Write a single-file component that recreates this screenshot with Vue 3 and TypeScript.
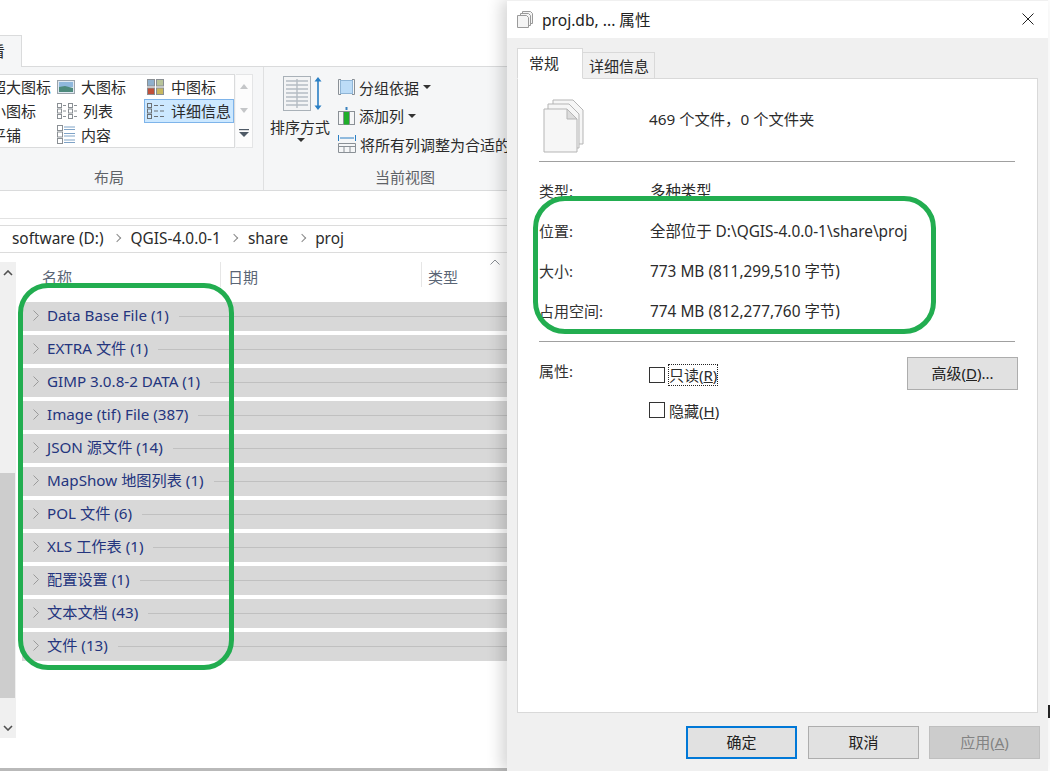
<script setup lang="ts">
const groups: string[] = [
  'Data Base File (1)', 'EXTRA 文件 (1)', 'GIMP 3.0.8-2 DATA (1)', 'Image (tif) File (387)',
  'JSON 源文件 (14)', 'MapShow 地图列表 (1)', 'POL 文件 (6)', 'XLS 工作表 (1)',
  '配置设置 (1)', '文本文档 (43)', '文件 (13)'
]
const info = [
  ['类型:', '多种类型'],
  ['位置:', '全部位于 D:\\QGIS-4.0.0-1\\share\\proj'],
  ['大小:', '773 MB (811,299,510 字节)'],
  ['占用空间:', '774 MB (812,277,760 字节)']
]
</script>

<template>
  <div class="screen">
    <div class="explorer">
      <div class="tabrow"><div class="viewtab"><span>看</span></div></div>
      <div class="ribbon">
        <div class="rgroup layout">
          <div class="galwrap">
            <div class="gallery">
              <div class="gi c1">超大图标</div>
              <div class="gi">
                <svg width="18" height="14" viewBox="0 0 18 14"><rect x=".5" y=".5" width="17" height="13" fill="#dfe9f2" stroke="#9aa3ab"/><rect x="2" y="2" width="14" height="5" fill="#8fb8dc"/><path d="M2 7l6-1 8 2v4H2z" fill="#4d8a7c"/></svg>
                <span>大图标</span>
              </div>
              <div class="gi c3">
                <svg width="17" height="16" viewBox="0 0 17 16"><rect x=".5" y=".5" width="7" height="6.5" fill="#8fb0cc" stroke="#8a8f94"/><rect x="9.5" y=".5" width="7" height="6.5" fill="#b8c49a" stroke="#8a8f94"/><rect x=".5" y="9" width="7" height="6.5" fill="#c0503a" stroke="#8a8f94"/><rect x="9.5" y="9" width="7" height="6.5" fill="#c8b860" stroke="#8a8f94"/></svg>
                <span>中图标</span>
              </div>
              <div class="gi c1">小图标</div>
              <div class="gi">
                <svg width="20" height="16" viewBox="0 0 20 16" fill="none" stroke="#8a8f94"><rect x=".5" y=".5" width="4" height="4"/><rect x=".5" y="6" width="4" height="4"/><rect x=".5" y="11.5" width="4" height="4"/><rect x="11.5" y=".5" width="4" height="4"/><rect x="11.5" y="6" width="4" height="4"/><rect x="11.5" y="11.5" width="4" height="4"/><path d="M6 2.5h3M6 8h3M6 13.5h3M17 2.5h3M17 8h3M17 13.5h3"/></svg>
                <span>列表</span>
              </div>
              <div class="gi c3 sel">
                <svg width="17" height="16" viewBox="0 0 17 16" fill="none" stroke="#6b7075"><rect x=".5" y=".5" width="4" height="4"/><rect x=".5" y="6" width="4" height="4"/><rect x=".5" y="11.5" width="4" height="4"/><path d="M7 2.5h4M13 2.5h4M7 8h4M13 8h4M7 13.5h4M13 13.5h4"/></svg>
                <span>详细信息</span>
              </div>
              <div class="gi c1">平铺</div>
              <div class="gi">
                <svg width="18" height="19" viewBox="0 0 18 19" fill="none"><g stroke="#8a8f94"><rect x=".5" y=".5" width="5" height="5"/><rect x=".5" y="7" width="5" height="5"/><rect x=".5" y="13.5" width="5" height="5"/></g><path d="M7 2h11M7 4.5h11M7 8.5h11M7 11h11M7 15h11M7 17.5h11" stroke="#7fa3c7"/></svg>
                <span>内容</span>
              </div>
              <div class="gi"></div>
            </div>
            <div class="spin">
              <i class="tri up"></i>
              <i class="tri dn"></i>
              <svg class="more" width="10" height="8" viewBox="0 0 10 8"><path d="M0 .5h10" stroke="#4f5a66" stroke-width="1.4"/><path d="M0 3h10L5 8z" fill="#4f5a66"/></svg>
            </div>
          </div>
          <div class="glabel">布局</div>
        </div>
        <div class="rgroup view">
          <div class="viewbody">
            <div class="sortbtn">
              <div class="sorticon">
                <svg width="28" height="35" viewBox="0 0 28 35"><rect x=".5" y=".5" width="27" height="34" fill="#f3f4f5" stroke="#a9b1b8"/><path d="M3 5h22M3 9h22M3 13h22M3 17h22M3 21h22M3 25h22M3 29h22M14 3v29" stroke="#b5bcc3" stroke-width="1.4"/></svg>
                <svg width="8" height="35" viewBox="0 0 8 35"><path d="M4 1l3.5 4.5h-7zM4 34l3.5-4.5h-7z" fill="#2a7fc4"/><path d="M4 4v27" stroke="#2a7fc4" stroke-width="1.6"/></svg>
              </div>
              <span class="sortlabel">排序方式</span>
              <i class="caret"></i>
            </div>
            <div class="viewlist">
              <div class="vi">
                <svg width="17" height="16" viewBox="0 0 17 16"><path d="M3 .5H.5v15H3M14 .5h2.5v15H14" fill="none" stroke="#8a9096"/><rect x="2.5" y="1.5" width="12" height="13" fill="#bcdcf7" stroke="#8fb5d6"/></svg>
                <span>分组依据</span><i class="caret"></i>
              </div>
              <div class="vi">
                <svg width="17" height="18" viewBox="0 0 17 18" fill="none"><rect x=".5" y="4.5" width="16" height="13" stroke="#8a9096"/><path d="M5.5 4.5v13M11.5 4.5v13" stroke="#8a9096"/><rect x="6" y="5" width="5" height="12.5" fill="#1fae2a"/><path d="M8.5 0v3" stroke="#3a82bd" stroke-width="2"/></svg>
                <span>添加列</span><i class="caret"></i>
              </div>
              <div class="vi">
                <svg width="18" height="18" viewBox="0 0 18 18" fill="none"><path d="M.5 0v6M17.5 0v6M2 3h14" stroke="#2a7fc4"/><path d="M.5 8.500h17v9H.5zM.5 11.500h17M6 11.500v6M12 11.500v6" stroke="#8a9096"/></svg>
                <span>将所有列调整为合适的</span>
              </div>
            </div>
          </div>
          <div class="glabel">当前视图</div>
        </div>
      </div>
      <div class="gapstrip"></div>
      <div class="address">
        <span class="crumb">software (D:)</span><span class="chev"></span>
        <span class="crumb">QGIS-4.0.0-1</span><span class="chev"></span>
        <span class="crumb">share</span><span class="chev"></span>
        <span class="crumb">proj</span>
      </div>
      <div class="content">
        <div class="scrollbar">
          <svg class="sa" width="10" height="6" viewBox="0 0 10 6"><path d="M1 5l4-4 4 4" fill="none" stroke="#505050" stroke-width="1.6"/></svg>
          <div class="track"><div class="thumb"></div></div>
          <svg class="sa" width="10" height="6" viewBox="0 0 10 6"><path d="M1 1l4 4 4-4" fill="none" stroke="#505050" stroke-width="1.6"/></svg>
        </div>
        <div class="filelist">
          <div class="cols">
            <div class="col name">名称</div>
            <div class="col date">日期</div>
            <div class="col type">类型
              <svg class="sorta" width="10" height="6" viewBox="0 0 10 6"><path d="M.5 5.500L5 1l4.500 4.500" fill="none" stroke="#8a8f94"/></svg>
            </div>
          </div>
          <div class="groups">
            <div v-for="g in groups" :key="g" class="grp">
              <svg class="gchev" width="6" height="11" viewBox="0 0 6 11"><path d="M.5.500l5 5-5 5" fill="none" stroke="#9a9a9a"/></svg>
              <span class="gname">{{ g }}</span>
              <span class="gline"></span>
            </div>
          </div>
        </div>
      </div>
    </div>

    <div class="dialog">
      <div class="titlebar">
        <svg width="16" height="17" viewBox="0 0 16 17" fill="#f4f4f4" stroke="#9a9a9a"><path d="M5.500.5h8l2 2v10h-10z"/><path d="M3.500 2.500h8l2 2v10h-10z"/><path d="M.5 4.500h9l2 2v10H.5z"/></svg>
        <span class="ttext">proj.db, ... 属性</span>
        <svg class="close" width="12" height="12" viewBox="0 0 12 12"><path d="M.5.500l11 11M11.500.500l-11 11" stroke="#222" stroke-width="1"/></svg>
      </div>
      <div class="dbody">
        <div class="dtabs">
          <div class="dtab active">常规</div>
          <div class="dtab">详细信息</div>
        </div>
        <div class="panel">
          <div class="head">
            <svg width="42" height="54" viewBox="0 0 42 54">
              <g fill="#f6f6f6" stroke="#b5b5b5">
                <path d="M10 1h20l10 10v34H10z"/>
                <path d="M5 5h21l10 10v34H5z"/>
                <path d="M1 10h23l10 10v33H1z"/>
                <path d="M24 10v10h10z" fill="#dcdcdc"/>
              </g>
            </svg>
            <span>469 个文件，0 个文件夹</span>
          </div>
          <div class="hr"></div>
          <div class="rows">
            <div v-for="r in info" :key="r[0]" class="row">
              <span class="lb">{{ r[0] }}</span><span>{{ r[1] }}</span>
            </div>
          </div>
          <div class="hr second"></div>
          <div class="attrs">
            <span class="lb attrlb">属性:</span>
            <div class="checks">
              <label class="chk"><i class="box"></i><span class="focus">只读(<u>R</u>)</span></label>
              <label class="chk"><i class="box"></i><span>隐藏(<u>H</u>)</span></label>
            </div>
            <div class="btn adv">高级(<u>D</u>)...</div>
          </div>
        </div>
        <div class="footer">
          <div class="btn primary">确定</div>
          <div class="btn">取消</div>
          <div class="btn disabled">应用(<u>A</u>)</div>
        </div>
      </div>
    </div>

    <div class="ring ring-left"></div>
    <div class="ring ring-right"></div>
    <i class="edge-mark"></i>
  </div>
</template>

<style scoped>
.screen {
  position: relative;
  width: 1050px;
  height: 771px;
  overflow: hidden;
  background: #fff;
  font-family: "Noto Sans", "Noto Sans CJK SC", sans-serif;
  font-size: 15px;
  color: #2b2b2b;
}
.explorer {
  width: 520px;
  height: 768px;
  border-bottom: 3px solid #b9b9b9;
  display: flex;
  flex-direction: column;
}
.tabrow {
  height: 67px;
  box-sizing: border-box;
  padding-top: 35px;
  border-bottom: 1px solid #dadbdc;
  flex: none;
}
.viewtab {
  width: 22px;
  height: 32px;
  box-sizing: border-box;
  background: #f5f6f7;
  border: 1px solid #dadbdc;
  border-left: 0;
  border-bottom: 0;
  overflow: hidden;
  position: relative;
  line-height: 30px;
  direction: rtl;
  padding-right: 16px;
  white-space: nowrap;
}
.ribbon {
  height: 124px;
  flex: none;
  box-sizing: border-box;
  background: #f5f6f7;
  border-bottom: 1px solid #dadbdc;
  display: flex;
}
.rgroup {
  display: flex;
  flex-direction: column;
  height: 123px;
}
.layout {
  width: 264px;
  flex: none;
  border-right: 1px solid #dfe0e1;
  box-sizing: border-box;
  padding-top: 7px;
}
.galwrap {
  display: flex;
  height: 74px;
}
.gallery {
  width: 235px;
  height: 74px;
  box-sizing: border-box;
  background: #fff;
  border: 1px solid #dadbdc;
  border-left: 0;
  display: grid;
  grid-template-columns: 55px 89px 90px;
  grid-auto-rows: 24px;
  overflow: hidden;
}
.gi {
  display: flex;
  align-items: center;
  gap: 6px;
  padding-left: 2px;
  padding-bottom: 1px;
  white-space: nowrap;
  box-sizing: border-box;
}
.c3 { padding-left: 3px; gap: 7px; }
.c1 { padding-left: 0; justify-content: flex-end; }
.gallery .c1:nth-child(1) { padding-right: 4px; }
.gallery .c1:nth-child(4) { padding-right: 19px; }
.gallery .c1:nth-child(7) { padding-right: 34px; }
.sel {
  background: #cce8ff;
  border: 1px solid #7eb4ea;
  padding-left: 2px;
}
.spin {
  width: 17px;
  height: 74px;
  box-sizing: border-box;
  margin-left: 1px;
  background: #fcfcfc;
  border: 1px solid #e4e5e6;
  border-left: 0;
  display: flex;
  flex-direction: column;
  align-items: center;
  padding-top: 9px;
}
.tri { width: 0; height: 0; border: 4px solid transparent; }
.tri.up { border-top: 0; border-bottom: 5px solid #c4c6c8; }
.tri.dn { border-bottom: 0; border-top: 5px solid #c4c6c8; margin-top: 19px; }
.more { margin-top: 16px; display: block; }
.glabel {
  text-align: center;
  color: #5f6368;
  line-height: 20px;
  margin-top: 19px;
}
.layout .glabel { width: 218px; }
.view {
  flex: 1;
  padding-top: 9px;
  position: relative;
}
.viewbody { display: flex; height: 72px; }
.sortbtn {
  width: 74px;
  display: flex;
  flex-direction: column;
  align-items: center;
  position: relative;
}
.sorticon { display: flex; gap: 3px; margin-left: 2px; }
.sortlabel {
  margin-top: 6px;
  line-height: 20px;
  white-space: nowrap;
  margin-left: -2px;
}
.sortbtn .caret { margin: 1px 0 0; }
.caret {
  display: inline-block;
  width: 0;
  height: 0;
  margin-left: 0;
  border: 4px solid transparent;
  border-bottom: 0;
  border-top: 4px solid #333;
}
.viewlist {
  display: flex;
  flex-direction: column;
  gap: 10.500px;
  margin-top: 2px;
}
.vi {
  display: flex;
  align-items: center;
  gap: 4px;
  height: 18px;
  white-space: nowrap;
}
.view .glabel { margin-top: 19px; text-align: left; padding-left: 111px; }
.gapstrip {
  height: 27px;
  flex: none;
  border-bottom: 1px solid #e2e2e2;
  box-sizing: content-box;
}
.address {
  height: 26px;
  flex: none;
  margin-top: 6px;
  border-top: 1px solid #dcdcdc;
  border-bottom: 1px solid #dcdcdc;
  display: flex;
  align-items: center;
  padding: 0 0 2px 12px;
  box-sizing: content-box;
  height: 24px;
  gap: 10.500px;
  font-size: 15.400px;
  color: #2a2a2a;
  white-space: nowrap;
}
.chev {
  width: 5px;
  height: 5px;
  border-top: 1.500px solid #8a8a8a;
  border-right: 1.500px solid #8a8a8a;
  transform: rotate(45deg);
  flex: none;
}
.content {
  display: flex;
  flex: 1;
  margin-top: 9px;
  min-height: 0;
}
.scrollbar {
  width: 16px;
  height: 476px;
  flex: none;
  background: #f0f0f0;
  display: flex;
  flex-direction: column;
  align-items: center;
  justify-content: space-between;
  padding: 8px 0 7px;
  box-sizing: border-box;
}
.track {
  flex: 1;
  width: 16px;
  padding-top: 197px;
  box-sizing: border-box;
}
.thumb { width: 15px; height: 225px; background: #cdcdcd; }
.filelist {
  flex: 1;
  padding-left: 6px;
  min-width: 0;
}
.cols {
  height: 40px;
  display: flex;
  color: #5a6575;
}
.col {
  height: 25px;
  box-sizing: border-box;
  line-height: 31px;
  position: relative;
}
.name { width: 199px; padding-left: 20px; border-right: 1px solid #e6e6e6; }
.date { width: 201px; padding-left: 7px; border-right: 1px solid #e6e6e6; }
.type { width: 86px; padding-left: 6px; }
.sorta { position: absolute; left: 68px; top: -3px; }
.groups {
  display: flex;
  flex-direction: column;
  gap: 4px;
}
.grp {
  height: 29px;
  background: #d8d8d8;
  display: flex;
  align-items: center;
  padding-left: 11px;
  width: 486px;
  box-sizing: border-box;
  gap: 8px;
  color: #24357e;
  font-size: 15.200px;
  white-space: nowrap;
}
.gchev { margin-top: -3px; }
.gname { padding-bottom: 3px; line-height: 20px; }
.gline { flex: 1; height: 1px; background: #c0c0c0; margin-left: 2px; }
.dialog {
  position: absolute;
  left: 507px;
  top: 0;
  width: 541px;
  height: 771px;
  background: #f0f0f0;
  box-shadow: -6px 0 14px rgba(0, 0, 0, .16);
  display: flex;
  flex-direction: column;
}
.titlebar {
  height: 38px;
  flex: none;
  box-sizing: border-box;
  background: #fff;
  border-top: 1px solid #f0f0f0;
  display: flex;
  align-items: center;
  padding-left: 10px;
  gap: 9px;
  position: relative;
  font-size: 15.600px;
  color: #222;
}
.close { position: absolute; left: 515px; top: 12px; }
.dbody {
  flex: 1;
  display: flex;
  flex-direction: column;
  padding: 11px 0 0 10px;
  min-height: 0;
}
.dtabs {
  display: flex;
  height: 30px;
  flex: none;
  align-items: flex-end;
  position: relative;
  z-index: 1;
  margin-bottom: -1px;
}
.dtab {
  height: 27px;
  line-height: 26px;
  padding: 0 6px;
  width: 72px;
  box-sizing: border-box;
  text-align: center;
  background: #f0f0f0;
  border: 1px solid #d9d9d9;
  border-left: 0;
  border-bottom: 1px solid #d9d9d9;
  white-space: nowrap;
}
.dtab.active {
  width: 66px;
  height: 31px;
  line-height: 28px;
  background: #fff;
  border: 1px solid #d9d9d9;
  border-bottom: 1px solid #fff;
  text-align: left;
  padding-left: 11px;
}
.panel {
  width: 521px;
  height: 635px;
  flex: none;
  box-sizing: border-box;
  background: #fff;
  border: 1px solid #d9d9d9;
  padding: 0 22px 0 21px;
}
.head {
  height: 82px;
  display: flex;
  align-items: center;
  gap: 64px;
  padding: 0 0 0 4px;
  font-size: 15.300px;
}
.head svg { margin-top: 12px; }
.head span { margin-top: -4px; }
.hr { height: 1px; background: #a0a0a0; }
.rows {
  padding-top: 8px;
  height: 179px;
  box-sizing: border-box;
}
.row {
  height: 40px;
  display: flex;
  align-items: center;
  font-size: 15.400px;
}
.lb { width: 111px; flex: none; color: #333; font-size: 15px; }
.attrs {
  display: flex;
  padding-top: 15px;
  position: relative;
}
.attrlb { line-height: 28px; width: 110px; }
.checks { display: flex; flex-direction: column; gap: 11px; padding-top: 6px; }
.chk {
  display: flex;
  align-items: center;
  gap: 4px;
  height: 24px;
}
.box {
  width: 14px;
  height: 14px;
  border: 1px solid #333;
  background: #fff;
  flex: none;
}
.focus { outline: 1px dotted #222; outline-offset: 0; line-height: 20px; }
.btn {
  width: 111px;
  height: 33px;
  box-sizing: border-box;
  background: #e1e1e1;
  border: 1px solid #adadad;
  display: flex;
  align-items: center;
  justify-content: center;
  padding-bottom: 2px;
  color: #222;
}
.adv { margin-left: auto; margin-right: -3px; }
.footer {
  display: flex;
  gap: 11px;
  padding: 13px 0 0 169px;
}
.footer .btn:last-child { margin-left: -1px; }
.primary { border: 2px solid #0078d7; }
.disabled { background: #ccc; border-color: #bfbfbf; color: #838383; }
.ring {
  position: absolute;
  box-sizing: border-box;
  border: 5px solid #22ad50;
  pointer-events: none;
}
.ring-left { left: 18px; top: 283px; width: 216px; height: 387px; border-radius: 30px; }
.ring-right { left: 533px; top: 196px; width: 403px; height: 138px; border-radius: 32px; }
.edge-mark {
  position: absolute;
  left: 1048px;
  top: 705px;
  width: 2px;
  height: 13px;
  background: #222;
}
</style>
